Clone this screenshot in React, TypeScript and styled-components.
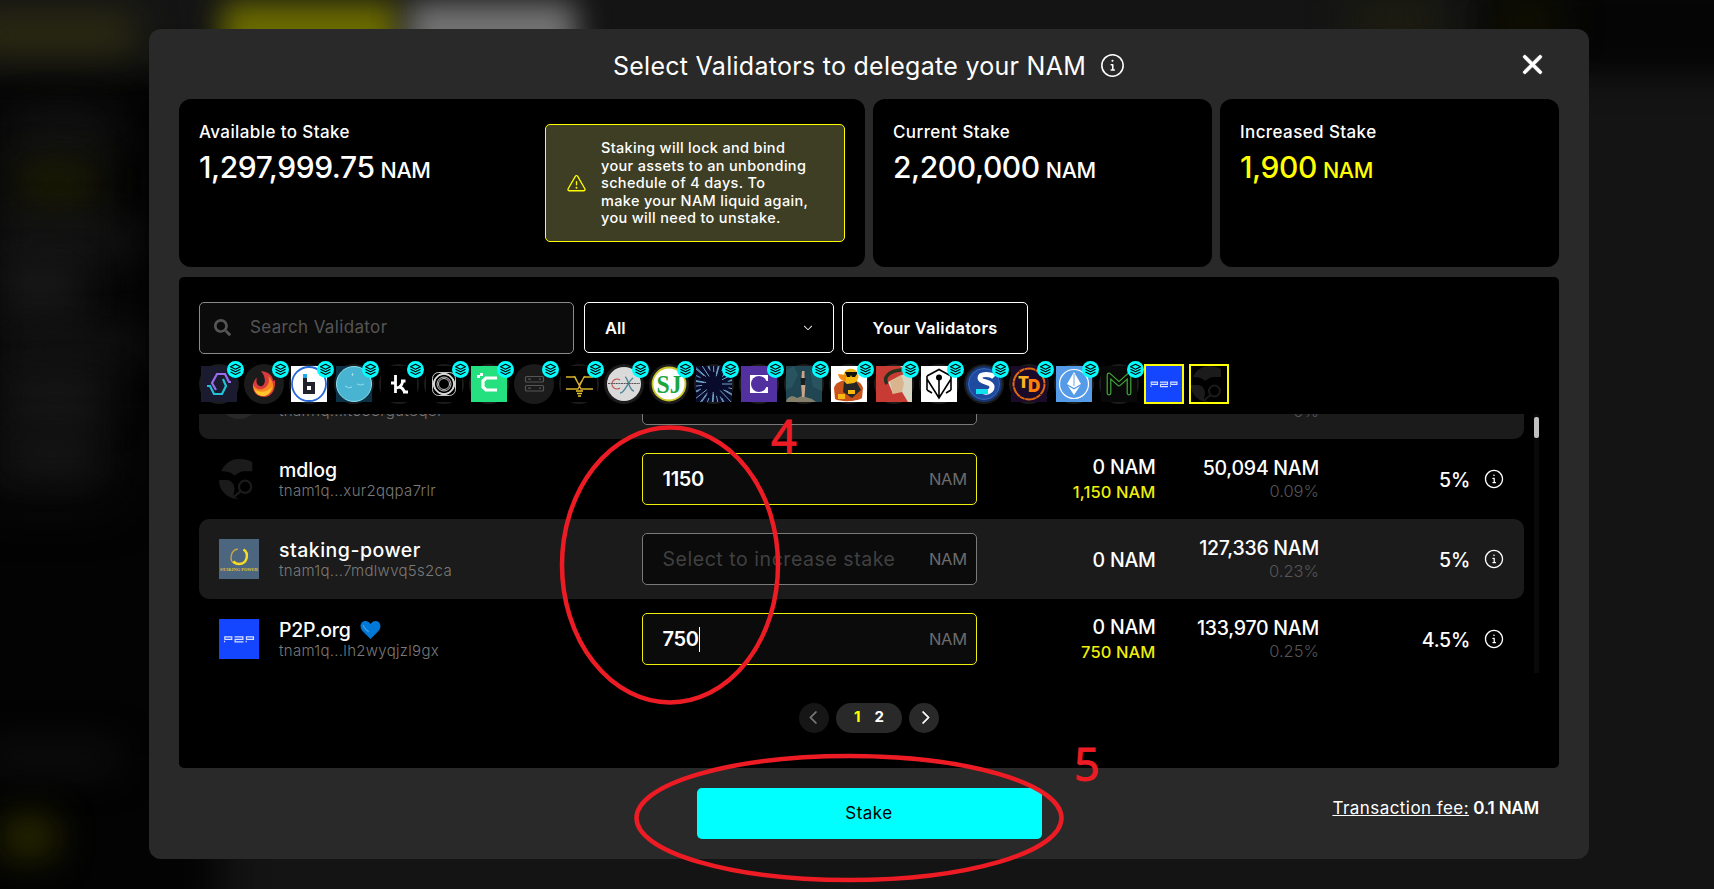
import React from "react";
import styled, { createGlobalStyle, css } from "styled-components";
import { GoInfo, GoChevronDown, GoChevronLeft, GoChevronRight } from "react-icons/go";
import { PiWarning } from "react-icons/pi";
import { IoClose } from "react-icons/io5";
import { FaSearch } from "react-icons/fa";

const YELLOW = "#ffff00";
const CYAN = "#00ffff";
const RED = "#ed1c24";

const GlobalStyle = createGlobalStyle`
  * { box-sizing: border-box; }
  html, body { margin: 0; height: 100%; overflow: hidden; background: #141414; }
  body { font-family: Inter, "Liberation Sans", sans-serif; font-weight: 500; color: #fff; }
  svg { display: block; flex: none; }
`;

/* ---------- backdrop ---------- */

const Screen = styled.div`
  position: relative;
  height: 889px;
  overflow: hidden;
  padding: 29px 125px 30px 149px;
`;

const Backdrop = styled.div`
  position: absolute;
  inset: 0;
`;

const Blob = styled.div<{ $x: number; $y: number; $w: number; $h: number; $c: string; $blur?: number }>`
  position: absolute;
  left: ${(p) => p.$x}px;
  top: ${(p) => p.$y}px;
  width: ${(p) => p.$w}px;
  height: ${(p) => p.$h}px;
  background: ${(p) => p.$c};
  filter: blur(${(p) => p.$blur ?? 19}px);
`;

/* ---------- modal ---------- */

const Modal = styled.main`
  position: relative;
  width: 1440px;
  height: 830px;
  padding: 0 30px;
  border-radius: 12px;
  background: #292929;
`;

const Header = styled.header`
  position: relative;
  height: 70px;
  padding-top: 3px;
  display: flex;
  align-items: center;
  justify-content: center;
  gap: 14px;
`;

const Title = styled.h1`
  margin: 0;
  font-size: 25px;
  font-weight: 400;
  letter-spacing: 0.28px;
  white-space: nowrap;
`;

const Close = styled.button`
  position: absolute;
  right: 9px;
  top: 18px;
  padding: 0;
  border: 0;
  background: none;
  color: #fff;
`;

const Cards = styled.section`
  display: grid;
  grid-template-columns: 686px 339px 339px;
  gap: 8px;
  height: 168px;
`;

const Card = styled.div<{ $accent?: boolean }>`
  display: flex;
  justify-content: space-between;
  padding: 25px 20px;
  border-radius: 12px;
  background: #000;
  color: ${(p) => (p.$accent ? YELLOW : "#fff")};
`;

const CardLabel = styled.div`
  height: 17px;
  line-height: 17px;
  font-size: 17px;
  letter-spacing: 0.4px;
  color: #fff;
`;

const Amount = styled.div`
  display: flex;
  align-items: baseline;
  gap: 6px;
  margin-top: 8px;
  line-height: 36px;
  font-size: 30px;
  letter-spacing: -0.4px;
`;

const Unit = styled.span`
  font-size: 21.5px;
  letter-spacing: -0.4px;
`;

const Alert = styled.div`
  display: flex;
  align-items: center;
  gap: 14px;
  width: 300px;
  height: 118px;
  padding-left: 20px;
  border: 1px solid ${YELLOW};
  border-radius: 5px;
  background: #3e3e24;
  color: ${YELLOW};
`;

const AlertText = styled.p`
  margin: 0;
  font-size: 14.5px;
  line-height: 17.4px;
  letter-spacing: 0.33px;
  white-space: pre-line;
  color: #fff;
`;

const Panel = styled.section`
  height: 491px;
  margin-top: 10px;
  padding: 25px 20px 0;
  border-radius: 5px;
  background: #000;
`;

const Filters = styled.div`
  display: flex;
  height: 52px;
`;

const control = css`
  display: flex;
  align-items: center;
  border: 1px solid #fff;
  border-radius: 5px;
  font-size: 16.5px;
`;

const Search = styled.div`
  ${control}
  width: 375px;
  padding: 0 0 2px 14px;
  gap: 19px;
  border-color: #8a8a8a;
  background: #0b0b0b;
  color: #555;
  font-size: 17px;
  font-weight: 400;
  letter-spacing: 0.35px;
`;

const Select = styled.div`
  ${control}
  width: 250px;
  height: 51px;
  margin-left: 10px;
  padding: 0 18px 0 20px;
  justify-content: space-between;
  font-weight: 600;
`;

const OutlineButton = styled.button`
  ${control}
  width: 186px;
  margin-left: 8px;
  padding: 0;
  justify-content: center;
  background: #000;
  color: #fff;
  font-family: inherit;
  font-weight: 600;
  letter-spacing: 0.25px;
`;

const Strip = styled.div`
  display: flex;
  gap: 5px;
  margin-top: 10px;
  height: 40px;
`;

const Slot = styled.div<{ $selected?: boolean }>`
  position: relative;
  display: grid;
  place-items: center;
  width: 40px;
  height: 40px;
  border-radius: ${(p) => (p.$selected ? "0" : "50%")};
  background: ${(p) => (p.$selected ? "#000" : "#1b1b1b")};
  box-shadow: ${(p) => (p.$selected ? `inset 0 0 0 2px ${YELLOW}` : "none")};
`;

const Badge = styled.span`
  position: absolute;
  top: -3px;
  right: -5px;
  display: grid;
  place-items: center;
  width: 17px;
  height: 17px;
  border-radius: 50%;
  background: ${CYAN};
  color: #000;
`;

const Viewport = styled.div`
  position: relative;
  display: flex;
  gap: 10px;
  height: 259px;
  margin-top: 10px;
  overflow: hidden;
`;

const Rows = styled.div`
  width: 1325px;
  margin-top: -55px;
`;

const Row = styled.div<{ $shaded?: boolean }>`
  display: grid;
  grid-template-columns: 423px 335px 178.5px 163.5px 151px 1fr;
  align-items: center;
  height: 80px;
  padding-left: 20px;
  border-radius: 10px;
  background: ${(p) => (p.$shaded ? "#1b1b1b" : "#000")};
`;

const Identity = styled.div`
  display: flex;
  align-items: center;
  gap: 20px;
`;

const Name = styled.div<{ $tracking: number }>`
  display: flex;
  align-items: center;
  gap: 9px;
  height: 22px;
  padding-top: 2px;
  font-size: 19.5px;
  font-weight: 550;
  line-height: 22px;
  letter-spacing: ${(p) => p.$tracking}px;
`;

const Address = styled.div`
  height: 21px;
  line-height: 22px;
  font-size: 15px;
  font-weight: 300;
  letter-spacing: 0.3px;
  color: #7a7a7a;
`;

const StakeField = styled.div<{ $active?: boolean }>`
  display: flex;
  align-items: center;
  height: 52px;
  padding: 0 9px 0 19.5px;
  border: 1px solid ${(p) => (p.$active ? "#eeee0a" : "#7a7a7a")};
  border-radius: 5px;
  background: #0b0b0b;
  font-size: 20px;
  font-weight: 600;
  letter-spacing: -0.3px;
`;

const Placeholder = styled.span`
  font-size: 19.5px;
  font-weight: 400;
  letter-spacing: 0.55px;
  color: #404040;
`;

const Caret = styled.i`
  width: 1px;
  height: 25px;
  background: #fff;
`;

const Suffix = styled.span`
  margin-left: auto;
  font-size: 16.5px;
  font-weight: 400;
  letter-spacing: -0.2px;
  color: #6c6c6c;
`;

const Cell = styled.div`
  padding-top: 1px;
  text-align: right;
  font-size: 19.5px;
  line-height: 26px;
  letter-spacing: -0.25px;
  white-space: nowrap;
`;

const Added = styled.div`
  margin-top: -1px;
  font-size: 16.5px;
  letter-spacing: 0.1px;
  color: #eeee0a;
`;

const Power = styled.div`
  margin-top: -3px;
  font-size: 16.5px;
  font-weight: 300;
  letter-spacing: 0;
  color: #555;
`;

const InfoCell = styled.div`
  padding-left: 13.5px;
`;

const Track = styled.div`
  width: 5px;
  padding-top: 3px;
  background: #0a0a0a;
`;

const Thumb = styled.div`
  height: 21px;
  border-radius: 2px;
  background: #c0c0c0;
`;

const Pager = styled.nav`
  display: flex;
  justify-content: center;
  gap: 7px;
  margin-top: 30px;
`;

const PagerButton = styled.button<{ $disabled?: boolean }>`
  display: grid;
  place-items: center;
  width: 30px;
  height: 30px;
  padding: 0 ${(p) => (p.$disabled ? "2px 1px 0" : "0 1px 2px")};
  border: 0;
  border-radius: 50%;
  background: ${(p) => (p.$disabled ? "#161616" : "#292929")};
  color: ${(p) => (p.$disabled ? "#777" : "#fff")};
`;

const Pages = styled.div`
  display: flex;
  align-items: center;
  justify-content: center;
  gap: 14px;
  width: 66px;
  height: 30px;
  padding-bottom: 3px;
  border-radius: 15px;
  background: #292929;
  font-size: 15px;
  font-weight: 700;
`;

const CurrentPage = styled.span`
  color: ${YELLOW};
`;

const Footer = styled.footer`
  position: relative;
  display: flex;
  justify-content: center;
  padding-top: 20px;
`;

const StakeButton = styled.button`
  width: 345px;
  height: 51px;
  padding: 0 0 2px;
  border: 0;
  border-radius: 5px;
  background: ${CYAN};
  color: #000;
  font: 400 17px Inter, sans-serif;
  letter-spacing: 0.5px;
`;

const Fee = styled.div`
  position: absolute;
  right: 20px;
  top: 30px;
  font-size: 17px;
  font-weight: 400;
  line-height: 20px;
  letter-spacing: 0.45px;
  b { font-weight: 600; letter-spacing: -0.2px; margin-left: -1px; }
`;

const Marks = styled.svg`
  position: absolute;
  inset: 0;
  pointer-events: none;
`;

/* ---------- icons and validator logos (36 × 36 unit drawings) ---------- */

const Layers = () => (
  <svg width="13" height="13" viewBox="0 0 13 13" fill="none" stroke="currentColor" strokeWidth="1.1" strokeLinejoin="round">
    <path d="m6.500 1.200 5 2.500-5 2.500-5-2.500Z" />
    <path d="m1.500 6.300 5 2.500 5-2.500M1.500 8.900l5 2.500 5-2.500" />
  </svg>
);

const Unknown = ({ fill = "#1b1b1b" }: { fill?: string }) => (
  <>
    <path fill={fill} d="M2 11C5 4 11 0 18 0c5 0 9 1 12 3v8h-7c-4 0-6 2-9 4-3-3-6-4-12-4Z" />
    <path fill={fill} d="M0 19h7c4 0 7 4 7 8 0 2-1 4-1 6 2 2 4 3 7 3C8 37 0 29 0 19Z" />
    <circle cx="23.5" cy="25" r="5.5" fill="none" stroke={fill} strokeWidth="2" />
    <path stroke={fill} strokeWidth="2" d="m19.5 29-6 5" />
  </>
);

const P2P = () => (
  <>
    <path fill="#1445ff" d="M0 0h36v36H0z" />
    <g fill="none" stroke="#d8e0ff" strokeWidth="1.1">
      <path d="M5.200 18.500v-2.400h6.300v2.300H5m0 1.200v1.400" />
      <path d="M14 16.100h7.500v2.300H14.500v2.200h7.500" />
      <path d="M24.700 18.500v-2.400H31v2.300h-6.500m0 1.200v1.400" />
    </g>
  </>
);

const rays = Array.from({ length: 34 }, (_, i) => {
  const a = (i * Math.PI * 2) / 34 + (i % 3) * 0.07;
  const r = 8 + ((i * 7) % 9);
  return `M${18 + Math.cos(a) * r} ${18 + Math.sin(a) * r}L${18 + Math.cos(a) * 25} ${18 + Math.sin(a) * 25}`;
}).join("");

const logos: React.ReactNode[] = [
  <>
    <path fill="#1a1b2e" d="M0 0h36v36H0z" />
    <g fill="none" strokeWidth="2.2">
      <path stroke="#9b6cf0" d="M30 16h-2l-4-8h-8l-5 9 4 7" />
      <path stroke="#22c3d6" d="M6 20h3l4 8h8l4-8-3-7" />
    </g>
  </>,
  <>
    <path fill="#d93a3c" d="M15 5c8 1 12 5 12 10l2-1c1 9-3 17-11 17S6 25 7 18c1-3 2-5 4-6-2 6 2 9 5 8 4-2 4-9-1-15Z" />
    <path fill="#f98a1f" d="M7 18c2 6 9 7 13 3 3-3 4-7 2-11 6 5 7 13 2 17-7 6-17 1-17-9Z" />
    <path fill="#ffc62b" d="M8 23c5 4 12 4 18-2-2 7-5 9-9 9s-7-2-9-7Z" />
  </>,
  <>
    <path fill="#fff" d="M0 0h36v36H0z" />
    <circle cx="18" cy="18" r="17" fill="none" stroke="#2868d8" strokeWidth="1.8" />
    <path fill="#22222c" fillRule="evenodd" d="M12 12h4v4h8v12H12Zm4 8v4h4v-4Z" />
    <path fill="#20a8e8" d="M12 8h4v4h-4z" />
  </>,
  <>
    <path fill="#0c3144" d="M0 0h36v36H0z" />
    <circle cx="18" cy="18" r="17.5" fill="#49b4d2" stroke="#8be0ee" />
    <path d="M15.500 8.500h2m-1-1.500v3M9 20q4 3 7 1m5-3q4 2 7 0" fill="none" stroke="#a5e4ee" strokeWidth=".8" />
  </>,
  <>
    <path fill="#000" d="M0 0h36v36H0z" />
    <path fill="none" stroke="#fff" strokeWidth="2.800" d="M14.500 9v18M10 17h5m0 5c4 0 6-3 7-7m-4 6c3 0 4 2 6 5.500M20 15h4.500M22 26h5" />
  </>,
  <>
    <path fill="#000" d="M0 0h36v36H0z" />
    <g fill="none" stroke="#ddd" strokeWidth=".9">
      <circle cx="18" cy="18" r="5.500" />
      <circle cx="18" cy="18" r="7" />
      <rect x="6.500" y="6.500" width="23" height="23" rx="6" />
      {[15, 35, 55, 75].map((a) => (
        <rect key={a} x="8.500" y="8.500" width="19" height="19" rx="7" transform={`rotate(${a} 18 18)`} />
      ))}
    </g>
  </>,
  <>
    <path fill="#25e07f" d="M0 0h36v36H0z" />
    <path fill="none" stroke="#fff" strokeWidth="3.200" d="M26 12H15l-3 3v6l3 3h11" />
    <path fill="#fff" d="M6 9h3v3H6zM9 7h3v3H9z" />
  </>,
  <g fill="none" stroke="#555" strokeWidth="1.2">
    <rect x="9.5" y="10.500" width="18" height="5.500" rx="1" />
    <rect x="9.5" y="19.500" width="18" height="5.500" rx="1" />
    <path d="M12 13.200h3m8 0h2m-13 9h3m8 0h2" />
  </g>,
  <>
    <path fill="#000" d="M0 0h36v36H0z" />
    <path fill="none" stroke="#d9b22e" strokeWidth="1.300" d="M5 11h9l6 12h12M32 11h-9l-6 12H5M13 10l5 9 6-9" />
    <path stroke="#f2c62e" strokeWidth="1.600" d="M15 25h7m-6 2.500h5m-4 2.500h3" />
  </>,
  <>
    <circle cx="18" cy="18" r="17" fill="#dadada" />
    <path fill="none" stroke="#c05050" strokeWidth="1.200" d="M14 14a5 5 0 1 0 0 8" />
    <path fill="none" stroke="#4a8796" strokeWidth="1.400" d="M14 27c5 0 8-12 13-15M19 11c3 0 4 14 9 14" />
    <path stroke="#555" strokeWidth="1.200" strokeDasharray="2 .6" d="M2 17.500h32" />
  </>,
  <>
    <circle cx="18" cy="18" r="16.5" fill="#fff" stroke="#c9c428" strokeWidth="1.800" />
    <text x="18" y="26.500" textAnchor="middle" fontFamily="Liberation Serif, serif" fontWeight="700" fontSize="26" textLength="25" lengthAdjust="spacingAndGlyphs" fill="#1ba640">SJ</text>
  </>,
  <>
    <path fill="#080b2c" d="M0 0h36v36H0z" />
    <path stroke="#7fb4d8" strokeWidth=".9" d={rays} />
  </>,
  <>
    <path fill="#5330a0" d="M0 0h36v36H0z" />
    <path fill="#fff" d="M9 9h18v18H9z" />
    <circle cx="18" cy="18" r="8" fill="#5330a0" />
    <path fill="#5330a0" d="M23 15h5v6h-5z" />
  </>,
  <>
    <path fill="#1f4652" d="M0 0h36v36H0z" />
    <path fill="#28545f" d="M0 4 8 0l4 9-6 12-6 3ZM24 4l12 7v14l-9-4Z" />
    <path fill="#85806c" d="M0 36c1-5 6-8 11-4l5-2 10 3 4 3Z" />
    <path fill="#caa58a" d="M16 5h2.500v5l1 7-1 14h-2.500l-1-14Z" />
    <path fill="#17201f" d="M14.500 12h5v7h-4.500z" />
  </>,
  <>
    <path fill="#fff" d="M0 0h36v36H0z" />
    <path fill="#c8521c" d="M3 22c1-5 7-8 14-8s13 1 15 8l-1 10c-6 4-22 4-27 1Z" />
    <path fill="#262626" d="m13 16 12-1 5 9-9 8-9-6Z" />
    <path fill="#f6b712" d="M13 8c1-6 10-7 13-2 3 5 1 9-3 11l-7 1c-3-2-4-6-3-10ZM7 28h7v5H7zM17 24h7v4h-7z" />
    <path fill="#f58a12" d="m7 8 8 1v6c-4 0-7-2-8-7Z" />
    <path fill="#111" d="M14 6h12v2l-2 3h-3l-1-2-1 2h-3Z" />
  </>,
  <>
    <path fill="#d8d5c2" d="M0 0h36v36H0z" />
    <path fill="#c83a34" d="M0 0h24c7 4 6 8 2 9l-14 7 5 12 9 8H0Z" />
    <path fill="#d9b48c" d="m14 15 11-6 3 8-2 9-9 3Z" />
    <path fill="none" stroke="#26321b" strokeWidth="3.500" d="M11 18C7 12 12 5 25 4" />
    <path fill="#c83a34" d="m17 28 9-2 6 10H14Z" />
  </>,
  <>
    <path fill="#fff" d="M0 0h36v36H0z" />
    <path fill="none" stroke="#000" strokeWidth="1.600" d="m6 10 12-6.500L30 10v14M6 10v14m0-11 12 19 12-19M18 13v19M6 24l5 3m19-3-5 3" />
    <circle cx="18" cy="11.5" r="3" />
  </>,
  <>
    <circle cx="18" cy="18" r="18" fill="#16356f" />
    <circle cx="18" cy="18" r="15.5" fill="#1e4ba0" stroke="#3b68b8" />
    <path fill="none" stroke="#fff" strokeWidth="5" d="M28 11c-3-3-14-4-14 1s12 3 12 9c0 4-5 6-8 5" />
    <path stroke="#10e0f0" strokeWidth="5" d="M10 25.500h12" />
  </>,
  <>
    <path fill="#1b0a2a" d="M0 0h36v36H0z" />
    <circle cx="18" cy="18" r="15.500" fill="none" stroke="#e06a10" strokeWidth="2" strokeDasharray="11 .6 5 .4" />
    <g fontFamily="Inter, sans-serif" fontWeight="900">
      <text x="7" y="22" fontSize="16" fill="#ffb020">T</text>
      <text x="17" y="26" fontSize="17" fill="#ff7f0a">D</text>
    </g>
  </>,
  <>
    <path fill="#559be8" d="M0 0h36v36H0z" />
    <circle cx="18" cy="18" r="14.500" fill="none" stroke="#fff" strokeWidth="1.200" />
    <path fill="#fff" d="m18 6 7 12-7 4-7-4Zm-6 14 6 3.500 6-3.500-6 9Z" />
    <path stroke="#6ea5e4" d="M18 8v12" />
  </>,
  <>
    <path fill="#080808" d="M0 0h36v36H0z" />
    <g fill="none" strokeLinejoin="round" strokeLinecap="round">
      <path stroke="#41a83a" strokeWidth="4.800" d="M8 27V9l10 9 10-9v18" />
      <path stroke="#080808" strokeWidth="2.400" d="M8 27V9l10 9 10-9v18" />
    </g>
  </>,
];

const StakingPower = () => (
  <>
    <path fill="#4d6680" d="M0 0h36v36H0z" />
    <path fill="none" stroke="#c9a63c" strokeWidth="1.200" d="M17 9c-7 1-8 11-3 13" />
    <path fill="none" stroke="#f8dc28" strokeWidth="2.200" d="M22 9.500c5 3 4 13-4 13-2 0-4-1-5-2.500" />
    <text x="1" y="28.500" textLength="34" lengthAdjust="spacingAndGlyphs" fontFamily="Liberation Serif, serif" fontWeight="700" fontSize="4.400" fill="#e5c32c">STAKING POWER</text>
  </>
);

const Logo = ({ size, children }: { size: number; children: React.ReactNode }) => (
  <svg width={size} height={size} viewBox="0 0 36 36">{children}</svg>
);

const Heart = () => (
  <svg width="21" height="20" viewBox="0 0 21 20">
    <path fill="#0078d7" d="M10.500 19 2 10.500C-1 6 1 1 5.500 1c2.500 0 4 1.500 5 3 1-1.500 2.500-3 5-3C20 1 22 6 19 10.500Z" />
    <path fill="none" stroke="#3d9be5" strokeWidth="1.300" d="M3 5c1 3 3 5 6 7" />
  </svg>
);

interface Validator {
  name: string;
  tracking?: number;
  address: string;
  logo: React.ReactNode;
  verified?: boolean;
  value?: string;
  focused?: boolean;
  added?: string;
  stake: string;
  power: string;
  commission: string;
}

const validators: Validator[] = [
  { name: "", address: "tnam1q...lt633rgut8q8r", logo: <circle cx="18" cy="18" r="18" fill="#292929" />, stake: "", power: "0%", commission: "" },
  { name: "mdlog", tracking: 0, address: "tnam1q...xur2qqpa7rlr", logo: <Unknown />, value: "1150", added: "1,150 NAM", stake: "50,094 NAM", power: "0.09%", commission: "5%" },
  { name: "staking-power", address: "tnam1q...7mdlwvq5s2ca", logo: <StakingPower />, stake: "127,336 NAM", power: "0.23%", commission: "5%" },
  { name: "P2P.org", tracking: -0.25, address: "tnam1q...lh2wyqjzl9gx", logo: <P2P />, verified: true, value: "750", focused: true, added: "750 NAM", stake: "133,970 NAM", power: "0.25%", commission: "4.5%" },
];

const ValidatorRow = ({ v, shaded }: { v: Validator; shaded: boolean }) => (
  <Row $shaded={shaded}>
    <Identity>
      <Logo size={40}>{v.logo}</Logo>
      <div>
        <Name $tracking={v.tracking ?? 0.5}>{v.name}{v.verified && <Heart />}</Name>
        <Address>{v.address}</Address>
      </div>
    </Identity>
    <StakeField $active={!!v.value}>
      {v.value ?? <Placeholder>{v.name && "Select to increase stake"}</Placeholder>}
      {v.focused && <Caret />}
      <Suffix>{v.name && "NAM"}</Suffix>
    </StakeField>
    <Cell>
      {v.name && "0 NAM"}
      {v.added && <Added>{v.added}</Added>}
    </Cell>
    <Cell>
      {v.stake || "\u00a0"}
      <Power>{v.power}</Power>
    </Cell>
    <Cell>{v.commission}</Cell>
    <InfoCell>{v.name && <GoInfo size={20} />}</InfoCell>
  </Row>
);

export default function App() {
  return (
    <Screen>
      <GlobalStyle />
      <Backdrop>
        <Blob $x={-60} $y={75} $w={280} $h={860} $c="#030303" $blur={22} />
        <Blob $x={1480} $y={-20} $w={300} $h={95} $c="#050505" $blur={16} />
        <Blob $x={-30} $y={14} $w={165} $h={40} $c="#2e2d12" />
        <Blob $x={222} $y={2} $w={176} $h={80} $c="#6c6c00" $blur={15} />
        <Blob $x={408} $y={2} $w={168} $h={80} $c="#747474" $blur={15} />
        <Blob $x={1350} $y={2} $w={90} $h={38} $c="#1e1e10" />
        <Blob $x={1490} $y={2} $w={70} $h={38} $c="#121202" />
        <Blob $x={-20} $y={110} $w={135} $h={390} $c="#0d0d0d" $blur={26} />
        <Blob $x={20} $y={118} $w={95} $h={24} $c="#161616" />
        <Blob $x={20} $y={166} $w={75} $h={34} $c="#1e1e00" />
        <Blob $x={0} $y={228} $w={135} $h={22} $c="#1a1a1a" />
        <Blob $x={5} $y={272} $w={70} $h={32} $c="#1d1d1d" />
        <Blob $x={10} $y={336} $w={130} $h={22} $c="#161616" />
        <Blob $x={10} $y={386} $w={95} $h={28} $c="#1b1b1b" />
        <Blob $x={10} $y={442} $w={85} $h={26} $c="#191919" />
        <Blob $x={-10} $y={745} $w={125} $h={26} $c="#101010" />
        <Blob $x={2} $y={816} $w={54} $h={42} $c="#282800" $blur={17} />
      </Backdrop>

      <Modal>
        <Header>
          <Title>Select Validators to delegate your NAM</Title>
          <GoInfo size={25} />
          <Close aria-label="Close"><IoClose size={35} strokeWidth={10} stroke="currentColor" /></Close>
        </Header>

        <Cards>
          <Card>
            <div>
              <CardLabel>Available to Stake</CardLabel>
              <Amount>1,297,999.75<Unit>NAM</Unit></Amount>
            </div>
            <Alert>
              <PiWarning size={21} />
              <AlertText>{"Staking will lock and bind\nyour assets to an unbonding\nschedule of 4 days. To\nmake your NAM liquid again,\nyou will need to unstake."}</AlertText>
            </Alert>
          </Card>
          <Card>
            <div>
              <CardLabel>Current Stake</CardLabel>
              <Amount>2,200,000<Unit>NAM</Unit></Amount>
            </div>
          </Card>
          <Card $accent>
            <div>
              <CardLabel>Increased Stake</CardLabel>
              <Amount>1,900<Unit>NAM</Unit></Amount>
            </div>
          </Card>
        </Cards>

        <Panel>
          <Filters>
            <Search><FaSearch size={17} />Search Validator</Search>
            <Select>All<GoChevronDown size={14} /></Select>
            <OutlineButton>Your Validators</OutlineButton>
          </Filters>

          <Strip>
            {logos.map((logo, i) => (
              <Slot key={i}>
                <Logo size={36}>{logo}</Logo>
                <Badge><Layers /></Badge>
              </Slot>
            ))}
            <Slot $selected><Logo size={36}><P2P /></Logo></Slot>
            <Slot $selected><Logo size={36}><Unknown /></Logo></Slot>
          </Strip>

          <Viewport>
            <Rows>
              {validators.map((v, i) => (
                <ValidatorRow key={v.address} v={v} shaded={i % 2 === 0} />
              ))}
            </Rows>
            <Track><Thumb /></Track>
          </Viewport>

          <Pager>
            <PagerButton $disabled><GoChevronLeft size={21} stroke="currentColor" strokeWidth={0.6} /></PagerButton>
            <Pages><CurrentPage>1</CurrentPage><span>2</span></Pages>
            <PagerButton><GoChevronRight size={21} stroke="currentColor" strokeWidth={0.6} /></PagerButton>
          </Pager>
        </Panel>

        <Footer>
          <StakeButton>Stake</StakeButton>
          <Fee><u>Transaction fee:</u> <b>0.1 NAM</b></Fee>
        </Footer>
      </Modal>

      <Marks width="1714" height="889">
        <g fill="none" stroke={RED} strokeWidth="4.500">
          <ellipse cx="670" cy="565" rx="108" ry="137.500" />
          <ellipse cx="849" cy="818" rx="212.500" ry="62" />
        </g>
        <g fill={RED} stroke={RED} strokeWidth=".9" fontFamily="Noto Sans, sans-serif" fontWeight="400" fontSize="45">
          <text x="771" y="453">4</text>
          <text x="1074" y="781">5</text>
        </g>
      </Marks>
    </Screen>
  );
}
